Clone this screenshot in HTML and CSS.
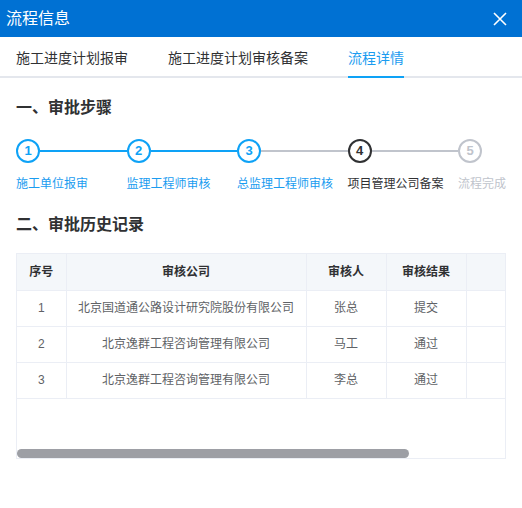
FILE: index.html
```html
<!DOCTYPE html>
<html lang="zh">
<head>
<meta charset="utf-8">
<title>流程信息</title>
<link rel="stylesheet" href="styles.css">
</head>
<body>
<div class="dialog">
  <div class="header">
    <span class="title">流程信息</span>
    <svg class="close" width="14" height="14" viewBox="0 0 14 14"><path d="M1 1L13 13M13 1L1 13" stroke="#fff" stroke-width="1.6" fill="none"/></svg>
  </div>
  <div class="tabs">
    <div class="tab">施工进度计划报审</div>
    <div class="tab">施工进度计划审核备案</div>
    <div class="tab active">流程详情</div>
  </div>
  <div class="content">
    <h2 class="section-title">一、审批步骤</h2>
    <div class="steps">
      <div class="step done">
        <div class="step-head"><span class="circle">1</span><span class="line"></span></div>
        <div class="label">施工单位报审</div>
      </div>
      <div class="step done">
        <div class="step-head"><span class="circle">2</span><span class="line"></span></div>
        <div class="label">监理工程师审核</div>
      </div>
      <div class="step done">
        <div class="step-head"><span class="circle">3</span><span class="line grey"></span></div>
        <div class="label">总监理工程师审核</div>
      </div>
      <div class="step current">
        <div class="step-head"><span class="circle">4</span><span class="line grey"></span></div>
        <div class="label">项目管理公司备案</div>
      </div>
      <div class="step wait">
        <div class="step-head"><span class="circle">5</span></div>
        <div class="label">流程完成</div>
      </div>
    </div>
    <h2 class="section-title second">二、审批历史记录</h2>
    <div class="table-wrap">
      <div class="table-body">
        <table class="history">
          <colgroup>
            <col class="c1"><col class="c2"><col class="c3"><col class="c4"><col class="c5">
          </colgroup>
          <thead>
            <tr><th>序号</th><th>审核公司</th><th>审核人</th><th>审核结果</th><th></th></tr>
          </thead>
          <tbody>
            <tr><td>1</td><td>北京国道通公路设计研究院股份有限公司</td><td>张总</td><td>提交</td><td></td></tr>
            <tr><td>2</td><td>北京逸群工程咨询管理有限公司</td><td>马工</td><td>通过</td><td></td></tr>
            <tr><td>3</td><td>北京逸群工程咨询管理有限公司</td><td>李总</td><td>通过</td><td></td></tr>
          </tbody>
        </table>
      </div>
      <div class="hscroll"><div class="thumb"></div></div>
    </div>
  </div>
</div>
</body>
</html>
```

FILE: styles.css
```css
* { box-sizing: border-box; }
html, body { margin: 0; padding: 0; background: #fff; }
body {
  font-family: "Liberation Sans", "Noto Sans CJK SC", sans-serif;
  color: #303133;
  width: 522px;
  height: 508px;
  overflow: hidden;
}
.header {
  height: 37px;
  background: #0071d3;
  display: flex;
  align-items: center;
  justify-content: space-between;
  padding: 0 15px 0 6px;
}
.title {
  color: #fff;
  font-size: 16px;
  line-height: 22px;
}
.close { display: block; }
.tabs {
  height: 41px;
  display: flex;
  gap: 40px;
  padding-left: 16px;
  border-bottom: 2px solid #e4e7ed;
}
.tab {
  font-size: 14px;
  line-height: 20px;
  padding-top: 11px;
  height: 41px;
  color: #303133;
  border-bottom: 2px solid transparent;
}
.tab.active {
  color: #1a9cf0;
  border-bottom-color: #0ea2f6;
}
.content { padding: 0 16px; }
.section-title {
  margin: 0;
  padding-top: 19px;
  font-size: 16px;
  line-height: 22px;
  font-weight: bold;
  color: #303133;
}
.section-title.second { padding-top: 22px; }
.steps {
  display: grid;
  grid-template-columns: repeat(5, 110.5px);
  margin-top: 20px;
}
.step-head {
  display: flex;
  align-items: center;
  height: 24px;
}
.circle {
  width: 24px;
  height: 24px;
  flex: none;
  border-radius: 50%;
  border: 2px solid #0ea2f6;
  color: #0ea2f6;
  font-size: 13px;
  font-weight: bold;
  line-height: 20px;
  text-align: center;
}
.line {
  flex: 1;
  height: 2px;
  background: #0ea2f6;
}
.line.grey { background: #c0c4cc; }
.label {
  margin-top: 13px;
  font-size: 12px;
  line-height: 16px;
  white-space: nowrap;
  color: #1a9cf0;
}
.step.current .circle { border-color: #303133; color: #303133; }
.step.current .label { color: #303133; }
.step.wait .circle { border-color: #c0c4cc; color: #c0c4cc; }
.step.wait .label { color: #c0c4cc; }

.table-wrap {
  margin-top: 17px;
  width: 490px;
  height: 206px;
  border: 1px solid #ebeef5;
  display: flex;
  flex-direction: column;
  overflow: hidden;
}
.table-body {
  flex: 1;
  overflow: hidden;
}
.hscroll {
  height: 9px;
  flex: none;
}
.thumb {
  width: 392px;
  height: 9px;
  background: #9d9fa5;
  border-radius: 5px;
}
.history {
  width: 606px;
  table-layout: fixed;
  border-collapse: collapse;
  font-size: 12px;
}
.c1 { width: 49px; }
.c2 { width: 240px; }
.c3 { width: 80px; }
.c4 { width: 80px; }
.c5 { width: 157px; }
.history th, .history td {
  height: 36px;
  padding: 0;
  text-align: center;
  border-right: 1px solid #ebeef5;
  border-bottom: 1px solid #ebeef5;
  line-height: 16px;
  white-space: nowrap;
}
.history th {
  background: #f4f7fa;
  color: #303133;
  font-weight: bold;
}
.history td { color: #606266; }
```
